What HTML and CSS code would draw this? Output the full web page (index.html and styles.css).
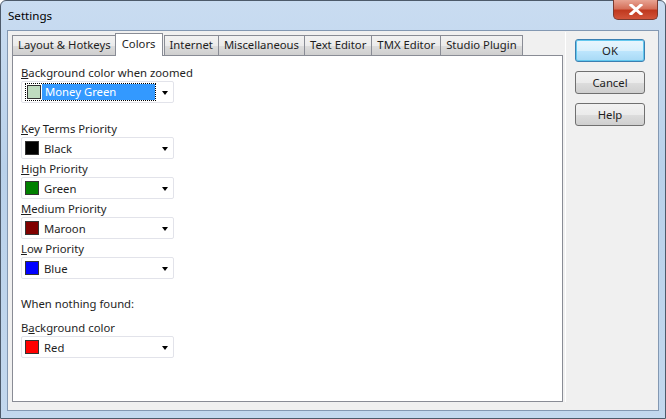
FILE: index.html
```html
<!DOCTYPE html>
<html lang="en">
<head>
    <meta charset="UTF-8">
    <title>Settings</title>
    <link rel="stylesheet" href="styles.css">
</head>
<body>

    <div class="window">
        <div class="titlebar">
            <span class="title">Settings</span>
            <div class="close-btn">
                <svg width="14" height="11" viewBox="0 0 14 11">
                    <path d="M2 1 L12 10 M12 1 L2 10" stroke="#fff" stroke-width="3" stroke-linecap="square"/>
                </svg>
            </div>
        </div>

        <div class="client">
            <div class="tabs-area">
                <div class="tab-strip">
                    <div class="tab">Layout &amp; Hotkeys</div>
                    <div class="tab active">Colors</div>
                    <div class="tab">Internet</div>
                    <div class="tab">Miscellaneous</div>
                    <div class="tab">Text Editor</div>
                    <div class="tab">TMX Editor</div>
                    <div class="tab">Studio Plugin</div>
                </div>

                <div class="panel">
                    <div class="field">
                        <label><u>B</u>ackground color when zoomed</label>
                        <div class="combo focused">
                            <div class="focus-box">
                                <span class="swatch" style="background:#c0dcc0"></span>
                                <span class="combo-text">Money Green</span>
                            </div>
                            <span class="arrow"></span>
                        </div>
                    </div>

                    <div class="group">
                        <div class="field">
                            <label><u>K</u>ey Terms Priority</label>
                            <div class="combo">
                                <span class="swatch" style="background:#000000"></span>
                                <span class="combo-text">Black</span>
                                <span class="arrow"></span>
                            </div>
                        </div>
                        <div class="field">
                            <label><u>H</u>igh Priority</label>
                            <div class="combo">
                                <span class="swatch" style="background:#008000"></span>
                                <span class="combo-text">Green</span>
                                <span class="arrow"></span>
                            </div>
                        </div>
                        <div class="field">
                            <label><u>M</u>edium Priority</label>
                            <div class="combo">
                                <span class="swatch" style="background:#800000"></span>
                                <span class="combo-text">Maroon</span>
                                <span class="arrow"></span>
                            </div>
                        </div>
                        <div class="field">
                            <label><u>L</u>ow Priority</label>
                            <div class="combo">
                                <span class="swatch" style="background:#0000ff"></span>
                                <span class="combo-text">Blue</span>
                                <span class="arrow"></span>
                            </div>
                        </div>
                    </div>

                    <p class="note">When nothing found:</p>

                    <div class="field">
                        <label>B<u>a</u>ckground color</label>
                        <div class="combo">
                            <span class="swatch" style="background:#ff0000"></span>
                            <span class="combo-text">Red</span>
                            <span class="arrow"></span>
                        </div>
                    </div>
                </div>
            </div>

            <div class="buttons">
                <button class="btn default">OK</button>
                <button class="btn">Cancel</button>
                <button class="btn">Help</button>
            </div>
        </div>
    </div>

</body>
</html>
```

FILE: styles.css
```css
* {
    box-sizing: border-box;
}
body {
    margin: 0;
    font-family: 'Noto Sans', sans-serif;
    font-size: 11.3px;
    color: #1e1e1e;
}
.window {
    width: 666px;
    height: 419px;
    display: flex;
    flex-direction: column;
    border: 1px solid #4d5a6a;
    border-radius: 6px 6px 0 0;
    background: linear-gradient(180deg, #c9dcf1 0%, #b9d1ea 40%, #c3d8ee 100%);
    padding: 0 6px 7px 6px;
}
.titlebar {
    height: 29px;
    display: flex;
    align-items: center;
    position: relative;
}
.title {
    margin-left: 1px;
    margin-top: -1px;
    font-size: 11.6px;
    color: #000;
}
.close-btn {
    position: absolute;
    right: 1px;
    top: -1px;
    width: 45px;
    height: 20px;
    border: 1px solid #7a3a30;
    border-top: none;
    border-radius: 0 0 5px 5px;
    background: linear-gradient(180deg, #e8a493 0%, #d5705a 45%, #c0391f 55%, #d2543a 100%);
    display: flex;
    align-items: center;
    justify-content: center;
}
.client {
    flex: 1;
    display: flex;
    background: #f0f0f0;
    border: 1px solid #8398b2;
    padding: 1px 0 8px 4px;
}
.tabs-area {
    width: 554px;
    display: flex;
    flex-direction: column;
    border-right: 1px solid #fff;
    padding-right: 2px;
}
.tab-strip {
    display: flex;
    align-items: flex-end;
    height: 23px;
}
.tab {
    height: 20px;
    padding: 0 5px;
    line-height: 18px;
    border: 1px solid #898c95;
    border-bottom: none;
    margin-right: -1px;
    background: linear-gradient(180deg, #f2f2f2 0%, #ebebeb 50%, #dddddd 51%, #cfcfcf 100%);
    white-space: nowrap;
}
.tab.active {
    height: 23px;
    background: #fff;
    margin: 0 1px -1px -1px;
    padding: 0 6px;
    position: relative;
    z-index: 1;
    line-height: 19px;
}
.panel {
    flex: 1;
    background: #fff;
    border: 1px solid #898c95;
    padding: 9px 8px;
}
.field label {
    display: block;
    line-height: 16px;
}
.combo {
    width: 153px;
    height: 22px;
    border: 1px solid #e2e3ea;
    border-radius: 2px;
    background: #fff;
    display: flex;
    align-items: center;
    padding-left: 3px;
    position: relative;
}
.swatch {
    width: 14px;
    height: 14px;
    border: 1px solid #333;
    flex: none;
}
.combo-text {
    margin-left: 5px;
}
.arrow {
    position: absolute;
    right: 5px;
    top: 9px;
    width: 0;
    height: 0;
    border-left: 3.5px solid transparent;
    border-right: 3.5px solid transparent;
    border-top: 4px solid #000;
}
.focus-box {
    display: flex;
    align-items: center;
    height: 18px;
    width: 131px;
    border: 1px dotted #000;
}
.focus-box .swatch {
    margin-left: 1px;
}
.focused .combo-text {
    flex: 1;
    margin-left: 1px;
    height: 16px;
    line-height: 16px;
    background: #3399ff;
    color: #fff;
    padding-left: 3px;
}
.group {
    margin-top: 18px;
    display: flex;
    flex-direction: column;
    gap: 2px;
}
.note {
    margin: 17px 0 8px 0;
    line-height: 16px;
}
.buttons {
    display: flex;
    flex-direction: column;
    gap: 9px;
    padding: 7px 0 0 9px;
}
.btn {
    width: 70px;
    height: 23px;
    font-family: 'Noto Sans', sans-serif;
    font-size: 11.3px;
    color: #1e1e1e;
    border: 1px solid #707070;
    border-radius: 3px;
    background: linear-gradient(180deg, #f2f2f2 0%, #ebebeb 50%, #dddddd 51%, #cfcfcf 100%);
    padding: 0;
}
.btn.default {
    border-color: #3c7fb1;
    background: linear-gradient(180deg, #eaf6fd 0%, #d9f0fc 50%, #bee6fd 51%, #a7d9f5 100%);
    box-shadow: inset 0 0 0 1px #62c8ee;
}
```
